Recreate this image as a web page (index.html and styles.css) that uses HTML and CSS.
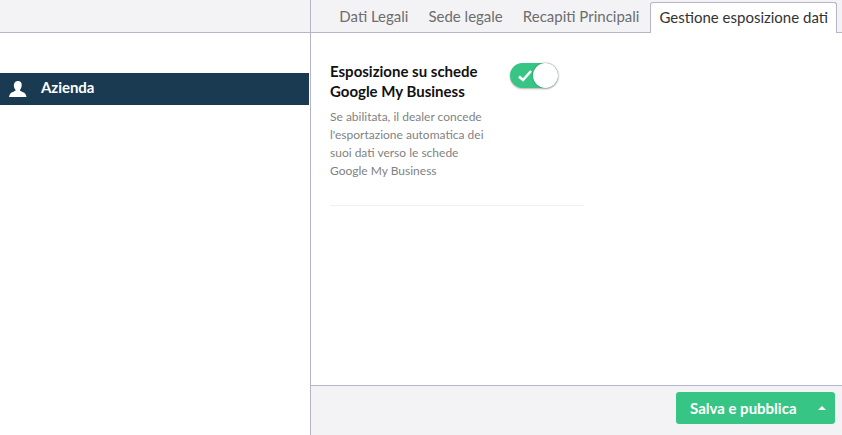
FILE: index.html
```html
<!DOCTYPE html>
<html lang="it">
<head>
<meta charset="utf-8">
<title>Azienda</title>
<link rel="stylesheet" href="styles.css">
</head>
<body>
<div class="app">
  <aside class="sidebar">
    <div class="menu-item">
      <svg class="user-icon" viewBox="0 0 18 16" width="18" height="16"><path fill="#fff" d="M9 0c2.400 0 3.700 1.600 3.700 3.900 0 1.800-.6 3.400-1.500 4.600-.4.600-.2 1.200.4 1.500 1.100.6 3 1.200 4 1.900.9.700 1.600 2.300 1.900 4.100H0c.3-1.800 1-3.400 1.900-4.100 1-.7 2.900-1.300 4-1.900.6-.3.800-.9.400-1.500-.9-1.200-1.500-2.800-1.500-4.600C5.300 1.600 6.600 0 9 0z"/></svg>
      <span>Azienda</span>
    </div>
  </aside>
  <main class="main">
    <nav class="tabs">
      <a class="tab">Dati Legali</a>
      <a class="tab">Sede legale</a>
      <a class="tab">Recapiti Principali</a>
      <a class="tab active">Gestione esposizione dati</a>
    </nav>
    <section class="content">
      <div class="setting">
        <div class="setting-text">
          <h3>Esposizione su schede Google My Business</h3>
          <p>Se abilitata, il dealer concede l'esportazione automatica dei suoi dati verso le schede Google My Business</p>
        </div>
        <div class="toggle">
          <svg class="check" viewBox="0 0 14 12" width="14" height="12"><path fill="none" stroke="#fff" stroke-width="2.600" d="M1 6.500l4 3.500 8-9"/></svg>
          <span class="knob"></span>
        </div>
      </div>
    </section>
    <footer class="footer">
      <div class="publish">
        <span class="publish-label">Salva e pubblica</span>
        <span class="caret"></span>
      </div>
    </footer>
  </main>
</div>
</body>
</html>
```
FILE: styles.css
```css
* { box-sizing: border-box; }
html, body { margin: 0; height: 100%; }
body { font-family: Lato, "Open Sans", sans-serif; background: #fff; overflow: hidden; }
.app { display: flex; width: 842px; height: 435px; }

.sidebar { width: 311px; flex: none; border-right: 1px solid #b7b4c9; padding-top: 73px; }
.sidebar { background: linear-gradient(#f3f3f6 0, #f3f3f6 32px, #b7b4c9 32px, #b7b4c9 33px, #fff 33px); }
.menu-item { height: 32px; width: 309px; background: #1a3a52; color: #fff; display: flex; align-items: center; padding: 0 0 4px 9px; font-size: 15px; font-weight: 700; letter-spacing: -.05px; }
.user-icon { flex: none; margin: 4px 14px 0 0; }

.main { flex: 1; display: flex; flex-direction: column; min-width: 0; }

.tabs { height: 33px; flex: none; background: #f3f3f6; border-bottom: 1px solid #b7b4c9; display: flex; justify-content: flex-end; align-items: flex-end; padding-right: 5px; }
.tab { height: 32px; padding: 0 10px; display: flex; align-items: center; font-size: 15px; color: #6d6d6d; white-space: nowrap; }
.tab.active { height: 31px; margin: 0 0 -1px 1px; padding: 0 8px 2px 8px; background: #fff; color: #333; border: 1px solid #b7b4c9; border-bottom: 0; border-radius: 3px 3px 0 0; }

.content { flex: 1; padding: 28px 19px 0; }
.setting { width: 254px; height: 145px; border-bottom: 1px solid #f0f0f3; display: flex; align-items: flex-start; }
.setting-text { width: 180px; flex: none; }
.setting-text h3 { margin: 0 0 7px; font-size: 15px; line-height: 20px; font-weight: 700; color: #111; }
.setting-text p { margin: 0; width: 160px; font-size: 12px; line-height: 18px; color: #7f8284; }

.toggle { margin-top: 2px; position: relative; width: 48px; height: 25px; border-radius: 13px; background: #37c585; box-shadow: 0 1px 2px rgba(0,0,0,.3); flex: none; }
.check { position: absolute; left: 8px; top: 7px; }
.knob { position: absolute; right: 0; top: 0; width: 25px; height: 25px; border-radius: 50%; background: #fff; box-shadow: 0 0 2px rgba(0,0,0,.4); }

.footer { height: 50px; flex: none; background: #f3f3f6; border-top: 1px solid #b7b4c9; display: flex; justify-content: flex-end; padding: 6px 7px 0 0; }
.publish { width: 159px; height: 32px; background: #37c585; border-radius: 3px; color: #fff; display: flex; align-items: center; justify-content: space-between; padding: 0 9px 0 14px; font-size: 15px; font-weight: 700; }
.caret { width: 0; height: 0; border-left: 4px solid transparent; border-right: 4px solid transparent; border-bottom: 4px solid #fff; }
```
